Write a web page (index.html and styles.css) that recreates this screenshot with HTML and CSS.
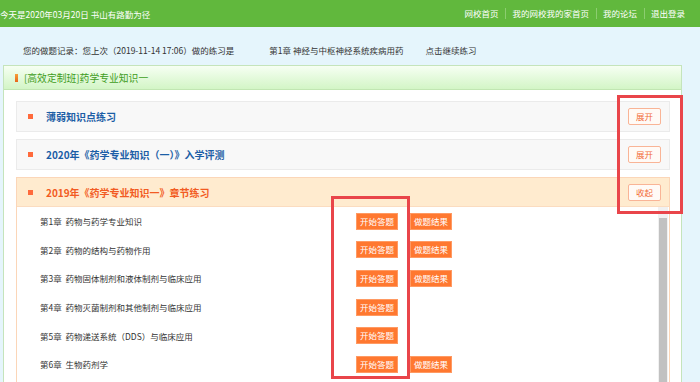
FILE: index.html
```html
<!DOCTYPE HTML>
<html>
<head>
	<meta charset="utf-8">
	<title>章节练习</title>
	<link rel="stylesheet" href="styles.css">
</head>
<body>
	<div class="topbar">
		<div class="hoy">今天是2020年03月20日 书山有路勤为径</div>
		<div class="enlaces">
			<a href="#">网校首页</a>
			<a href="#">我的网校我的家首页</a>
			<a href="#">我的论坛</a>
			<a href="#">退出登录</a>
		</div>
	</div>
	<div class="registro">
		<span>您的做题记录：您上次（2019-11-14 17:06）做的练习是</span>
		<span class="capitulo">第1章 神经与中枢神经系统疾病用药</span>
		<a href="#" class="seguir">点击继续练习</a>
	</div>
	<div class="panel">
		<div class="panel-cab"><i></i>[高效定制班]药学专业知识一</div>
		<div class="panel-cuerpo">
			<div class="bloque">
				<div class="bloque-cab"><i></i><span>薄弱知识点练习</span><a href="#" class="btn-borde">展开</a></div>
			</div>
			<div class="bloque">
				<div class="bloque-cab"><i></i><span>2020年《药学专业知识（一）》入学评测</span><a href="#" class="btn-borde">展开</a></div>
			</div>
			<div class="bloque abierto">
				<div class="bloque-cab"><i></i><span>2019年《药学专业知识一》章节练习</span><a href="#" class="btn-borde">收起</a></div>
				<div class="lista-caja">
					<ul class="lista">
						<li><span>第1章&nbsp;&nbsp;药物与药学专业知识</span><a href="#" class="btn">开始答题</a><a href="#" class="btn">做题结果</a></li>
						<li><span>第2章&nbsp;&nbsp;药物的结构与药物作用</span><a href="#" class="btn">开始答题</a><a href="#" class="btn">做题结果</a></li>
						<li><span>第3章&nbsp;&nbsp;药物固体制剂和液体制剂与临床应用</span><a href="#" class="btn">开始答题</a><a href="#" class="btn">做题结果</a></li>
						<li><span>第4章&nbsp;&nbsp;药物灭菌制剂和其他制剂与临床应用</span><a href="#" class="btn">开始答题</a></li>
						<li><span>第5章&nbsp;&nbsp;药物递送系统（DDS）与临床应用</span><a href="#" class="btn">开始答题</a></li>
						<li><span>第6章&nbsp;&nbsp;生物药剂学</span><a href="#" class="btn">开始答题</a><a href="#" class="btn">做题结果</a></li>
					</ul>
					<div class="barra">
						<div class="flecha"></div>
						<div class="pulgar"></div>
					</div>
				</div>
			</div>
		</div>
	</div>
	<div class="marca marca-a"></div>
	<div class="marca marca-b"></div>
</body>
</html>
```

FILE: styles.css
```css
*, *::after, *::before{
	box-sizing: border-box;
	margin: 0;
	padding: 0;
}
html, body{
	width: 100%;
	height: 100%;
}
body{
	position: relative;
	overflow: hidden;
	background-color: #e5f5fc;
	font-family: "Noto Sans CJK SC", "Noto Sans", sans-serif;
	font-size: 8.5px;
	color: #333;
}
a{
	color: inherit;
	text-decoration: none;
}
.topbar{
	display: flex;
	justify-content: space-between;
	align-items: center;
	height: 27px;
	padding-right: 15px;
	background-color: #61b83d;
	color: #fff;
}
.enlaces{
	display: flex;
	align-items: center;
}
.enlaces a{
	padding: 0 7px 0 6px;
	border-left: 1px solid #8ccd70;
	line-height: 11px;
}
.enlaces a:first-child{border-left: 0;}
.enlaces a:last-child{padding-right: 0;}
.registro{
	display: flex;
	align-items: center;
	height: 38px;
	padding: 8px 0 0 23px;
}
.capitulo{margin-left: 35px;}
.seguir{margin-left: 22px;}
.panel{
	margin: 0 18px 0 3px;
	border: 1px solid #c5e4bb;
	background-color: #fff;
}
.panel-cab{
	display: flex;
	align-items: center;
	height: 24px;
	padding-left: 11px;
	border-bottom: 1px solid #c1e6b2;
	background: linear-gradient(#f6fff3, #d3f5c6);
	color: #3f9d1c;
	font-size: 9.8px;
}
.panel-cab i{
	width: 3px;
	height: 8px;
	margin-right: 6px;
	background: linear-gradient(#f6a037, #e8651a);
}
.panel-cuerpo{
	padding: 11px 11px 0 12px;
}
.bloque{
	margin-bottom: 7px;
	border: 1px solid #ebebeb;
	background-color: #f8f8f8;
}
.bloque-cab{
	display: flex;
	align-items: center;
	height: 29px;
	padding: 0 8px 0 11px;
	color: #1c5ea6;
	font-size: 10px;
	font-weight: bold;
}
.bloque-cab i{
	width: 5px;
	height: 5px;
	margin-right: 13px;
	background-color: #ff6a3c;
}
.bloque-cab span{flex: 1;}
.btn-borde{
	width: 33px;
	height: 17px;
	line-height: 15px;
	text-align: center;
	border: 1px solid #f9b496;
	border-radius: 2px;
	background-color: #fffaf6;
	color: #f26a36;
	font-size: 8.5px;
	font-weight: normal;
}
.abierto{
	border-color: #fbd6b8;
	background-color: #fff;
}
.abierto .bloque-cab{
	height: 29px;
	border-bottom: 1px solid #fbdcc0;
	background-color: #ffebcf;
	color: #f25b23;
}
.lista-caja{
	display: flex;
	height: 200px;
	overflow: hidden;
}
.lista{
	flex: 1;
	list-style: none;
	padding-left: 23px;
}
.lista li{
	display: flex;
	align-items: center;
	height: 28.6px;
}
.lista li span{width: 316px;}
.btn{
	width: 42px;
	height: 17px;
	margin-right: 12px;
	text-align: center;
	border: 1px solid #ff9a63;
	line-height: 15px;
	background-color: #ff7830;
	color: #fff;
}
.barra{
	width: 10px;
	margin-right: 1px;
	background-color: #f1f1f1;
}
.flecha{
	position: relative;
	height: 11px;
}
.flecha::after{
	content: "";
	position: absolute;
	left: 3px;
	top: 4px;
	border: 2px solid transparent;
	border-bottom: 3px solid #a3a3a3;
	border-top: 0;
}
.pulgar{
	height: 180px;
	margin: 0 1px;
	background-color: #c1c1c1;
}
.marca{
	position: absolute;
	border: 3px solid #e9454a;
}
.marca-a{
	left: 617px;
	top: 95px;
	width: 66px;
	height: 119px;
}
.marca-b{
	left: 331px;
	top: 196px;
	width: 79px;
	height: 183px;
}
```
